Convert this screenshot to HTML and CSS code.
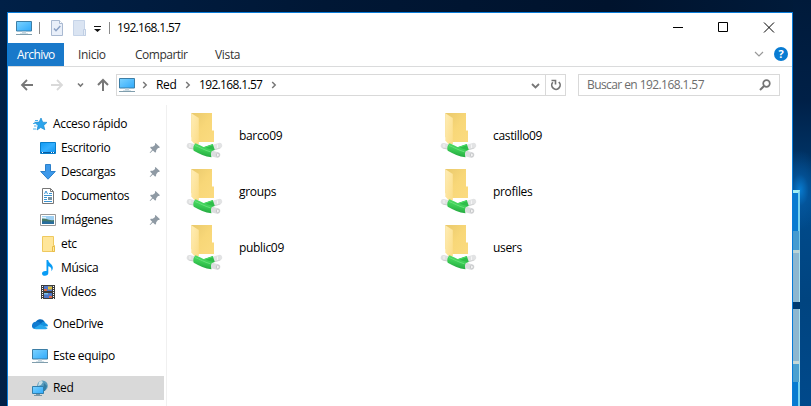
FILE: index.html
```html
<!DOCTYPE html>
<html lang="es">
<head>
<meta charset="utf-8">
<title>192.168.1.57</title>
<link rel="stylesheet" href="styles.css">
</head>
<body>
<svg class="defs" aria-hidden="true">
  <defs>
    <linearGradient id="screen" x1="0" y1="0" x2="1" y2="1"><stop offset="0" stop-color="#7dd3ff"/><stop offset="1" stop-color="#2fa9fb"/></linearGradient>
    <linearGradient id="desk" x1="0" y1="0" x2="1" y2="1"><stop offset="0" stop-color="#109af4"/><stop offset=".5" stop-color="#35b0ff"/><stop offset="1" stop-color="#0b91ee"/></linearGradient>
    <linearGradient id="flap" x1="0" y1="0" x2="1" y2="1"><stop offset="0" stop-color="#ffedb5"/><stop offset="1" stop-color="#fbdc87"/></linearGradient>
    <linearGradient id="back" x1="0" y1="0" x2="1" y2="1"><stop offset="0" stop-color="#e9c96c"/><stop offset=".5" stop-color="#f8d778"/><stop offset="1" stop-color="#fbdb80"/></linearGradient>
    <linearGradient id="pipe" x1=".6" y1="0" x2=".35" y2="1"><stop offset="0" stop-color="#55df6c"/><stop offset=".5" stop-color="#3acc54"/><stop offset="1" stop-color="#1f9f3b"/></linearGradient>
    <symbol id="monitor" viewBox="0 0 16 16">
      <path d="M.5 1.5h15v9.500H.5z" fill="url(#screen)" stroke="#3d7ea6"/>
      <path d="M6 11.500h4v2H6z" fill="#c2d4df"/><path d="M0 14h16v1H0z" fill="#809ead"/><path d="M4 13h8v.7H4z" fill="#c2d4df"/>
    </symbol>
    <symbol id="pin" viewBox="0 0 12 12">
      <path d="M6.500 1 11 5.200 9.800 6 9 5.900 7.200 8.300 7 10.200 6 10.600 3.900 8.500 1.200 11H.8V10.500L3.200 7.700 1.200 5.800 1.700 4.800 3.800 4.700 6.100 2.900 5.900 1.800z" fill="#8f9aa4"/>
    </symbol>
    <symbol id="netfolder" viewBox="0 0 38 48">
      <path d="M5.300 1H26v17.500h2V30H12L5.300 25z" fill="url(#back)"/>
      <path d="M5.300 1.300 12.800 6V32l-3 1.500-4.500-5z" fill="url(#flap)"/>
      <path d="m3.400 33.700 6 1.400" stroke="#e0e1e2" stroke-width="5.400" stroke-linecap="round"/>
      <path d="m2.500 36 6 1.300" stroke="#c6c8c9" stroke-width=".8"/>
      <path d="m27 35.300 6.500-1.800" stroke="#e2e3e4" stroke-width="5.400" stroke-linecap="round"/>
      <path d="m29 37.700 5.500-1.700" stroke="#c6c8c9" stroke-width=".8"/>
      <path d="m25 41.200 6.500 1.800" stroke="#dcdddf" stroke-width="5.600" stroke-linecap="round"/>
      <path d="m17.500 38.500 10.300-3.500" stroke="#2fbd4a" stroke-width="6.400"/>
      <path d="m18 35.700 9-3" stroke="#4bdd64" stroke-width="1"/>
      <path d="M9.500 31.300c3 1.200 6 2.700 9 4.200l8 2.500c-1.600 1.600-2 4.500-1 7.300-6.500-.5-12-3.500-17.800-6.500-.9-2.500-.4-5.500 1.800-7.500z" fill="url(#pipe)"/>
      <path d="M9 33.500c5 1.800 9 4.500 15.500 6.300" fill="none" stroke="#65e079" stroke-width="1"/>
      <ellipse cx="31.800" cy="43" rx="1.500" ry="1.900" fill="#f3f3f3" stroke="#b8babc" stroke-width=".7"/>
      <path d="M4 32v3.500M31.500 32.500v3.500" stroke="#fafafa" stroke-width=".8"/>
    </symbol>
    <symbol id="chev" viewBox="0 0 6 8"><path d="m1.200 1 3 3-3 3" fill="none" stroke="#777" stroke-width="1.500"/></symbol>
  </defs>
</svg>
<div class="wallpaper">
  <i class="edge top"></i><i class="mid"></i><i class="pane"></i><i class="gap"></i><i class="low"></i><i class="edge foot"></i>
</div>
<main class="window">
  <header class="titlebar">
    <svg class="i16 app"><use href="#monitor"/></svg>
    <i class="sep"></i>
    <svg class="props" viewBox="0 0 12 16"><path d="M.5.500h8l3 3v12H.5z" fill="#e9eff9" stroke="#a9b9d1"/><path d="M8.500.500v3h3" fill="#fff" stroke="#a9b9d1"/><path d="m3 8.500 2 2.200L9.300 6" fill="none" stroke="#8aa0c4" stroke-width="1.500"/></svg>
    <svg class="newf" viewBox="0 0 13 16"><path d="M.5.500h11v9h1v6H.5z" fill="#dae4f2" stroke="#c6d4e8"/><path d="M10.500 15.500v-6h2v6z" fill="#e8eef7" stroke="#c0cfe4"/></svg>
    <svg class="more" viewBox="0 0 7 6"><path d="M0 0h7v1H0zM0 3h7L3.500 6z" fill="#111"/></svg>
    <i class="sep"></i>
    <span class="title number">192.168.1.57</span>
    <svg class="controls" viewBox="0 0 102 12"><path d="M0 6.500h10M45.500 1.500h9v9h-9zM91 1.500l10 10M101 1.500l-10 10" fill="none" stroke="#000"/></svg>
  </header>
  <nav class="tabs">
    <span class="file">Archivo</span><span class="inicio">Inicio</span><span class="compartir">Compartir</span><span class="vista">Vista</span>
    <svg class="collapse" viewBox="0 0 10 6"><path d="m1 1 4 4 4-4" fill="none" stroke="#999" stroke-width="1.200"/></svg>
    <span class="help">?</span>
  </nav>
  <div class="navrow">
    <svg class="arrows" viewBox="0 0 92 14">
      <g fill="none" stroke="#777" stroke-width="1.800"><path d="M13 7H2M7 2 2 7l5 5"/><path d="M31 7h11M37 2l5 5-5 5" stroke="#d9d9d9"/><path d="m58 5.500 2.500 2.500L63 5.500" stroke-width="1.600"/><path d="M83 13V2M78 7l5-5 5 5" stroke-width="2"/></g>
    </svg>
    <div class="address">
      <svg class="i16"><use href="#monitor"/></svg>
      <svg class="chev a"><use href="#chev"/></svg><span class="red">Red</span>
      <svg class="chev b"><use href="#chev"/></svg><span class="ip number">192.168.1.57</span>
      <svg class="chev c"><use href="#chev"/></svg>
      <svg class="drop" viewBox="0 0 9 6"><path d="m1 1 3.500 3.500L8 1" fill="none" stroke="#777" stroke-width="1.800"/></svg>
      <span class="refresh"><svg viewBox="0 0 12 12"><path d="M2.800 3.300A4.200 4.200 0 1 0 8.800 3" fill="none" stroke="#747474" stroke-width="1.700"/><path d="M1.500 1.500H5.500v4" fill="none" stroke="#747474" stroke-width="1.600"/></svg></span>
    </div>
    <div class="search"><span class="hint">Buscar en 192.168.1.57</span><svg viewBox="0 0 12 12"><circle cx="7.500" cy="4.500" r="3.300" fill="none" stroke="#747474" stroke-width="1.700"/><path d="M5 7 1 11" stroke="#747474" stroke-width="2"/></svg></div>
  </div>
  <div class="body">
    <aside class="side">
      <div class="item root"><svg class="i16" viewBox="0 0 16 16"><path d="m9 2 1.700 4.200 4.300.2-3.300 3 1.100 4.300L8.700 11.500 5 14l1.100-4.500L2.500 6.300l4.600-.2z" fill="#2ba4ec" stroke="#1b8bd1" stroke-width=".7"/><path d="M3 4.500h3M1 7.500h2.500M2 10h2.500M1 13h3" stroke="#49b0ed"/></svg><span>Acceso rápido</span></div>
      <div class="item"><svg class="i16" viewBox="0 0 16 16"><path d="M.5 2.500h15v11H.5z" fill="url(#desk)" stroke="#087ecb"/><path d="M1 12.500h14" stroke="#075aa0"/><path d="M2 12.500h1M11 12.500h1M13 12.500h1" stroke="#fff"/></svg><span>Escritorio</span><svg class="pin"><use href="#pin"/></svg></div>
      <div class="item"><svg class="i16" viewBox="0 0 16 16"><path d="M5.500.500h5v7h4.800L8 15.200.7 7.500h4.800z" fill="#3d99ea" stroke="#2c80cb"/></svg><span>Descargas</span><svg class="pin"><use href="#pin"/></svg></div>
      <div class="item"><svg class="i16" viewBox="0 0 16 16"><path d="M2.500.500h8l3 3v12h-11z" fill="#fff" stroke="#777"/><path d="M10.500.500v3h3" fill="none" stroke="#777"/><path d="m4.500 6 1.500-3 1.500 3M9 5.500h3M4 7.500h8M4 9.500h3M4 11.500h3M4 13.500h8" fill="none" stroke="#3c94d1"/><path d="M8 9h4v3H8z" fill="#7794a5"/></svg><span>Documentos</span><svg class="pin"><use href="#pin"/></svg></div>
      <div class="item"><svg class="i16" viewBox="0 0 16 16"><path d="M.5 2.500h15v11H.5z" fill="#fff" stroke="#999"/><path d="M2 4h12v8H2z" fill="#9ed0f3"/><path d="M2 6c4 0 6 3 12 2v2H2z" fill="#467967"/><path d="M2 9.500c5-1 8 .5 12 0V12H2z" fill="#286d9d"/><path d="M2 5h4v1.500H2z" fill="#e5f4fc"/></svg><span>Imágenes</span><svg class="pin"><use href="#pin"/></svg></div>
      <div class="item"><svg class="i16" viewBox="0 0 16 16"><path d="M2.500.500h11v9h1v6h-12z" fill="#ffe69a" stroke="#efc95f"/><path d="M12.500 15.500v-5h2v5z" fill="#ffe8a3" stroke="#e8bd46"/></svg><span>etc</span></div>
      <div class="item"><svg class="i16" viewBox="0 0 16 16"><path d="M6.500 0h1.700c.3 3.300 4.600 4.200 4.600 7.700 0 1.400-.7 2.600-1.500 3.500.8-3-1-4.600-3-5V13c0 1.700-1.500 2.800-3.300 2.800S2 14.800 2 13.400c0-1.700 2-2.800 4.500-2.300z" fill="#099cf5"/></svg><span>Música</span></div>
      <div class="item"><svg class="i16" viewBox="0 0 16 16"><path d="M1 1h14v14H1z" fill="#3c3c3c"/><path d="M2.500 2v13M13.500 2v13" stroke="#fff" stroke-dasharray="1 1"/><path d="M4 2h8v5H4zM4 9h8v5H4z" fill="#5078c9"/><path d="M4 5h3v2H4zM9 12h3v2H9z" fill="#d86845"/><path d="M8 2.500h4v3H8z" fill="#dfbd3d"/><path d="M4 9h4v1.500H4z" fill="#7ac2e7"/></svg><span>Vídeos</span></div>
      <div class="item root spaced"><svg class="i16" viewBox="0 0 16 16"><path d="M3.500 7a5 5 0 0 1 9-1.500l-3 5z" fill="#0868b8"/><path d="M3.700 5.800C6 5 8 7 11 8.600L2.500 13A3.700 3.700 0 0 1 .3 8.200C.8 6.700 2 6 3.700 5.800z" fill="#117bd0"/><path d="M9 8c1-2.700 4-3 4.800-.5 1.500.2 2.200 1.400 2.200 2.800L11 11z" fill="#1492e0"/><path d="m2 12.200 6.300-4L15.700 12c-.5.800-1.300 1.200-2.200 1.200H4c-.8 0-1.500-.3-2-1z" fill="#29a8ed"/></svg><span>OneDrive</span></div>
      <div class="item root spaced"><svg class="i16"><use href="#monitor"/></svg><span>Este equipo</span></div>
      <div class="item root spaced selected"><svg class="i16" viewBox="0 0 16 16"><circle cx="10.500" cy="5.700" r="5.300" fill="#5b9dbd"/><path d="M7 2c2-1.500 3-1 4 0L9 5 6 6z" fill="#c9e0e7"/><path d="M12 3l3 3-2 5h-2z" fill="#347da2"/><path d="M.5 6.500h11v7H.5z" fill="url(#screen)" stroke="#317eab"/><path d="M4 14h4v1H4zM2 15h8v1H2z" fill="#7896a5"/></svg><span>Red</span></div>
    </aside>
    <section class="files">
      <div class="share"><svg><use href="#netfolder"/></svg><span>barco09</span></div>
      <div class="share"><svg><use href="#netfolder"/></svg><span>castillo09</span></div>
      <div class="share"><svg><use href="#netfolder"/></svg><span>groups</span></div>
      <div class="share"><svg><use href="#netfolder"/></svg><span>profiles</span></div>
      <div class="share"><svg><use href="#netfolder"/></svg><span>public09</span></div>
      <div class="share"><svg><use href="#netfolder"/></svg><span>users</span></div>
    </section>
  </div>
</main>
</body>
</html>
```
FILE: styles.css
```css
* { box-sizing: border-box; }
body {
  margin: 0;
  width: 811px;
  height: 406px;
  overflow: hidden;
  position: relative;
  padding: 12px 0 0 7px;
  background: linear-gradient(90deg, #002047 0, #001735 40%, #00132d 75%, #001b3b 100%);
  font: 12px/16px "Open Sans", "Noto Sans", sans-serif;
  letter-spacing: -.33px;
  color: #000;
}
svg { display: block; flex: none; }
span { white-space: nowrap; }
.number { letter-spacing: -.66px; }
.hint { letter-spacing: -.58px; }
.defs { position: absolute; width: 0; height: 0; }
.i16 { width: 16px; height: 16px; }

/* desktop wallpaper beside the window */
.wallpaper {
  position: absolute;
  left: 793px;
  top: 0;
  width: 18px;
  height: 406px;
  display: flex;
  flex-direction: column;
  padding-top: 190px;
  background:
    radial-gradient(ellipse 22px 40px at 7px 190px, #087bcf 0, rgba(5, 91, 165, .6) 40%, transparent 100%),
    linear-gradient(180deg, #001a3a 0, #002047 100px, #003365 160px, #004b8c 200px, #004480 300px, #00498b 406px);
}
.wallpaper i { width: 7px; flex: none; }
.edge { background: #087bd0; border-right: 2px solid #76d1ef; }
.top { height: 41px; border-top: 3px solid #a1eff5; }
.mid { height: 19px; background: #459bd0; border-right: 1px solid #76c5e5; }
.pane { height: 52px; background: #8db7d0; border-top: 3px solid #bad4d7; border-right: 1px solid #a8e0ef; }
.gap { height: 7px; background: #003b70; }
.low { height: 73px; background: linear-gradient(#8db7d0 52px, #c5d8d8 52px, #c5d8d8 55px, #4ba0d0 55px); border-right: 1px solid #a8e0ef; }
.foot { height: 24px; }

.window {
  position: relative;
  width: 786px;
  height: 394px;
  background: #fff;
  border: 1px solid #087bd8;
  border-bottom: 0;
}
.titlebar { height: 30px; display: flex; align-items: center; padding-left: 8px; }
.titlebar .sep { width: 1px; height: 12px; background: #8a8a8a; }
.app { margin: -1px 7px 0 0; }
.props { width: 12px; height: 16px; margin-left: 11px; }
.newf { width: 13px; height: 16px; margin-left: 10px; }
.more { width: 7px; height: 6px; margin: 2px 0 0 8px; }
.more + .sep { margin-left: 8px; }
.title { margin-left: 7px; }
.controls { width: 102px; height: 12px; margin: -2px 17px 0 auto; }

.tabs { height: 24px; display: flex; align-items: center; border-bottom: 1px solid #dadbdc; color: #333; }
.file { width: 56px; height: 23px; padding-left: 9px; line-height: 24px; background: #1979ca; color: #fff; letter-spacing: -.6px; }
.inicio { margin-left: 14px; width: 57px; }
.compartir { width: 80px; letter-spacing: -.5px; }
.collapse { width: 10px; height: 6px; margin: -1px 10px 0 auto; }
.help {
  width: 14px;
  height: 14px;
  margin: -1px 4px 0 0;
  border-radius: 50%;
  background: #087bd2;
  color: #fff;
  font: bold 11px/14px "Open Sans", sans-serif;
  text-align: center;
}

.navrow { height: 38px; display: flex; align-items: center; padding: 0 12px 2px 12px; }
.arrows { width: 92px; height: 14px; margin-right: 4px; }
.address { width: 450px; height: 22px; border: 1px solid #d9d9d9; display: flex; flex: none; align-items: center; padding-left: 2px; }
.chev { width: 6px; height: 8px; }
.a { margin-left: 7px; }
.red { width: 20px; margin-left: 8px; }
.b { margin-left: 9px; }
.ip { width: 63px; margin-left: 8px; }
.c { margin-left: 9px; }
.drop { width: 9px; height: 6px; margin: 2px 5px 0 auto; }
.refresh { width: 20px; height: 20px; padding: 4px; border-left: 1px solid #d9d9d9; }
.refresh svg { width: 12px; height: 12px; }
.search { width: 202px; height: 22px; margin-left: 12px; padding: 0 8px; border: 1px solid #d9d9d9; display: flex; flex: none; align-items: center; justify-content: space-between; color: #6d6d6d; }
.search svg { width: 12px; height: 12px; }

.body { display: flex; height: 301px; }
.side { width: 159px; padding: 7px 2px 0 0; border-right: 1px solid #f0f0f0; }
.item { height: 24px; display: flex; align-items: center; gap: 5px; padding: 0 3px 0 32px; }
.root { padding-left: 24px; }
.spaced { margin-top: 8px; }
.selected { background: #d9d9d9; }
.pin { width: 12px; height: 12px; margin-left: auto; }
.files { display: grid; grid-template-columns: 254px 254px; grid-auto-rows: 56px; padding-left: 19px; align-content: start; }
.share { display: flex; align-items: center; gap: 15px; height: 62px; }
.share svg { width: 38px; height: 48px; }
```
